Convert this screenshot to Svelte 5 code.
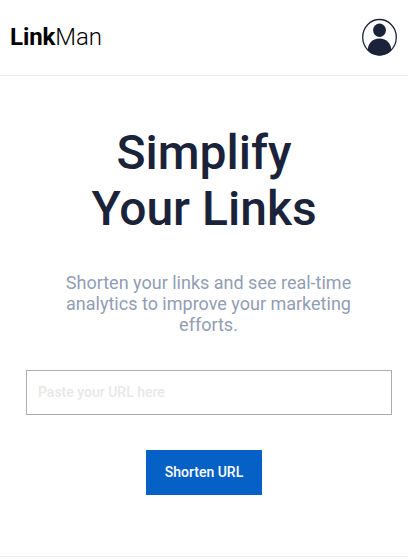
<script>
  let url = $state('');
</script>

<div class="page">
  <header>
    <div class="logo"><b>Link</b>Man</div>
    <svg class="avatar" viewBox="0 0 36 38" aria-label="Account" role="img">
      <defs>
        <clipPath id="ring"><ellipse cx="17.500" cy="19.300" rx="17" ry="18.200" /></clipPath>
      </defs>
      <ellipse cx="17.500" cy="12.200" rx="6.400" ry="6.700" fill="#1a233a" />
      <path clip-path="url(#ring)" fill="#1a233a" d="M5.700 38V32.500C5.700 25.500 10.200 20.500 17.500 20.500S29.300 25.500 29.300 32.500V38Z" />
      <ellipse cx="17.500" cy="19.300" rx="16.800" ry="17.800" fill="none" stroke="#1a233a" stroke-width="1.300" />
    </svg>
  </header>
  <main>
    <h1>Simplify<br />Your Links</h1>
    <p>Shorten your links and see real-time analytics to improve your marketing efforts.</p>
    <input type="text" placeholder="Paste your URL here" bind:value={url} />
    <button type="button">Shorten URL</button>
  </main>
</div>

<style>
  :global(body) {
    margin: 0;
    background: #fff;
    overflow: hidden;
  }
  .page {
    box-sizing: border-box;
    height: 557px;
    border-bottom: 1px solid #ebebeb;
    font-family: Roboto, sans-serif;
  }
  header {
    box-sizing: border-box;
    display: flex;
    justify-content: space-between;
    height: 76px;
    padding: 18px 10px 0;
    border-bottom: 1px solid #ebebeb;
  }
  .logo {
    color: #000;
    font-size: 24px;
    font-weight: 300;
    line-height: 38px;
    letter-spacing: -0.07px;
  }
  .logo b {
    font-weight: 700;
  }
  .avatar {
    width: 36px;
    height: 38px;
  }
  main {
    display: flex;
    flex-direction: column;
    align-items: center;
    padding: 49px 16px 0 26px;
  }
  h1 {
    margin: 0 10px 0 0;
    color: #1a233a;
    font-size: 48px;
    font-weight: 500;
    line-height: 56px;
    text-align: center;
  }
  p {
    width: 300px;
    margin: 35px 1px 0 0;
    color: #929db4;
    font-size: 18px;
    line-height: 21px;
    text-align: center;
  }
  input {
    box-sizing: border-box;
    width: 100%;
    height: 45px;
    margin: 35px 0 0;
    padding: 0 11px 2px;
    border: 1px solid #acacac;
    border-radius: 0;
    outline: none;
    font: 500 14px Roboto, sans-serif;
  }
  input::placeholder {
    color: #e8e8e8;
    opacity: 1;
  }
  button {
    width: 116px;
    height: 45px;
    margin: 35px 10px 0 0;
    padding: 0 0 2px;
    border: 0;
    background: #0661c6;
    color: #fff;
    font: 500 14px Roboto, sans-serif;
  }
</style>
